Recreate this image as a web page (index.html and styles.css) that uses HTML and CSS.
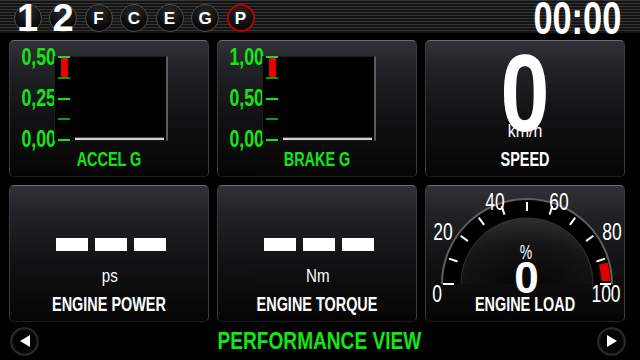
FILE: index.html
```html
<!DOCTYPE html>
<html lang="en">
<head>
    <meta charset="UTF-8">
    <meta name="viewport" content="width=device-width, initial-scale=1.0">
    <title>Performance View</title>
    <link rel="stylesheet" href="styles.css">
</head>
<body>
    <!-- Top bar: gear selector and clock -->
    <div class="topbar">
        <div class="gears">
            <span class="gear big">1</span>
            <span class="gear big">2</span>
            <span class="gear">F</span>
            <span class="gear">C</span>
            <span class="gear">E</span>
            <span class="gear">G</span>
            <span class="gear active">P</span>
        </div>
        <div class="clock">00:00</div>
    </div>

    <!-- Panels -->
    <div class="grid">
        <div class="panel">
            <div class="gchart">
                <div class="scale"><span>0,50</span><span>0,25</span><span>0,00</span></div>
                <div class="plot">
                    <div class="ticks"><i></i><i class="minor"></i><i></i><i class="minor"></i><i></i></div>
                    <div class="trace"></div>
                    <div class="marker"></div>
                </div>
            </div>
            <div class="label green">ACCEL G</div>
        </div>

        <div class="panel">
            <div class="gchart">
                <div class="scale"><span>1,00</span><span>0,50</span><span>0,00</span></div>
                <div class="plot">
                    <div class="ticks"><i></i><i class="minor"></i><i></i><i class="minor"></i><i></i></div>
                    <div class="trace"></div>
                    <div class="marker"></div>
                </div>
            </div>
            <div class="label green">BRAKE G</div>
        </div>

        <div class="panel speed">
            <div class="speed-value">0</div>
            <div class="unit">km/h</div>
            <div class="label">SPEED</div>
        </div>

        <div class="panel">
            <div class="dashes"><i></i><i></i><i></i></div>
            <div class="unit">ps</div>
            <div class="label">ENGINE POWER</div>
        </div>

        <div class="panel">
            <div class="dashes"><i></i><i></i><i></i></div>
            <div class="unit">Nm</div>
            <div class="label">ENGINE TORQUE</div>
        </div>

        <div class="panel gauge">
            <svg class="dial" viewBox="0 0 198 135" width="198" height="135">
                <defs>
                    <radialGradient id="dome" cx="50%" cy="100%" r="100%">
                        <stop offset="0" stop-color="#050505"/>
                        <stop offset="0.6" stop-color="#151515"/>
                        <stop offset="1" stop-color="#2e2e2e"/>
                    </radialGradient>
                </defs>
                <g transform="translate(101 98)">
                    <path d="M-85 0 A85 85 0 0 1 85 0 Z" fill="#000"/>
                    <path d="M-85 0 A85 85 0 0 1 85 0" fill="none" stroke="#5e5e5e" stroke-width="2"/>
                    <path d="M-66 0 A66 66 0 0 1 66 0 Z" fill="url(#dome)"/>
                    <path d="M-66 0 A66 66 0 0 1 66 0" fill="none" stroke="#333" stroke-width="1"/>
                    <g stroke="#fff" stroke-width="2">
                        <line x1="-84" y1="0" x2="-73" y2="0"/>
                        <line x1="-82" y1="0" x2="-73" y2="0" transform="rotate(18)"/>
                        <line x1="-82" y1="0" x2="-73" y2="0" transform="rotate(36)"/>
                        <line x1="-82" y1="0" x2="-73" y2="0" transform="rotate(54)"/>
                        <line x1="-82" y1="0" x2="-73" y2="0" transform="rotate(72)"/>
                        <line x1="-82" y1="0" x2="-73" y2="0" transform="rotate(90)"/>
                        <line x1="-82" y1="0" x2="-73" y2="0" transform="rotate(108)"/>
                        <line x1="-82" y1="0" x2="-73" y2="0" transform="rotate(126)"/>
                        <line x1="-82" y1="0" x2="-73" y2="0" transform="rotate(144)"/>
                        <line x1="-82" y1="0" x2="-73" y2="0" transform="rotate(162)"/>
                        <line x1="-84" y1="0" x2="-73" y2="0" transform="rotate(180)"/>
                    </g>
                    <path d="M76.3 -20.4 A79 79 0 0 1 78.95 -2.8" fill="none" stroke="#e00000" stroke-width="9"/>
                </g>
                <g class="dial-text" text-anchor="middle">
                    <text transform="translate(11 116) scale(.76 1)">0</text>
                    <text transform="translate(17 54) scale(.76 1)">20</text>
                    <text transform="translate(69 24) scale(.76 1)">40</text>
                    <text transform="translate(133 24) scale(.76 1)">60</text>
                    <text transform="translate(186 54) scale(.76 1)">80</text>
                    <text transform="translate(180 116) scale(.76 1)">100</text>
                </g>
            </svg>
            <div class="pct">%</div>
            <div class="gauge-value">0</div>
            <div class="label">ENGINE LOAD</div>
        </div>
    </div>

    <!-- Bottom bar -->
    <div class="footer">
        <span class="nav">
            <svg viewBox="0 0 10 12" width="10" height="12"><polygon points="10,0 10,12 0,6" fill="#fff"/></svg>
        </span>
        <div class="view-title">PERFORMANCE VIEW</div>
        <span class="nav">
            <svg viewBox="0 0 10 12" width="10" height="12"><polygon points="0,0 0,12 10,6" fill="#fff"/></svg>
        </span>
    </div>
</body>
</html>
```

FILE: styles.css
```css
/* Reset */
* { margin: 0; padding: 0; box-sizing: border-box; }

/* The dash font is a condensed face: Liberation Sans squeezed with scaleX */
body {
    width: 640px;
    height: 360px;
    overflow: hidden;
    background: #000;
    color: #fff;
    font-family: "Liberation Sans", Arial, sans-serif;
}

/* Top bar */
.topbar {
    height: 33px;
    display: flex;
    justify-content: space-between;
    background: repeating-linear-gradient(to bottom, #353535 0, #353535 1.5px, #141414 1.5px, #141414 3px);
}

.gears {
    display: flex;
    gap: 7.5px;
    padding: 4px 0 0 13.5px;
}

.gear {
    width: 28px;
    height: 28px;
    border-radius: 50%;
    border: 1px solid #4e4e4e;
    background: radial-gradient(circle at 50% 30%, #2c2c2c 0, #0a0a0a 65%, #000 100%);
    display: flex;
    align-items: center;
    justify-content: center;
    font-weight: bold;
    font-size: 17px;
    line-height: 1;
}

.gear.big {
    font-size: 38px;
    line-height: 26px;
}

.gear.active {
    border: 2px solid #b80000;
}

.clock {
    margin: 1px 19px 0 0;
    font-weight: bold;
    font-size: 47px;
    line-height: 34px;
    transform: scaleX(.73);
    transform-origin: right center;
}

/* Panel grid */
.grid {
    display: grid;
    grid-template-columns: repeat(3, 200px);
    grid-template-rows: repeat(2, 137px);
    gap: 8px;
    margin-top: 7px;
    padding-left: 9px;
}

.panel {
    position: relative;
    display: flex;
    flex-direction: column;
    padding-bottom: 7px;
    border: 1px solid #3a3b3e;
    border-top-color: #6c6d70;
    border-bottom-color: #1e1e1e;
    border-radius: 5px;
    background: linear-gradient(to bottom, #303236 0%, #202124 22%, #121214 55%, #050505 100%);
}

.label {
    margin-top: auto;
    text-align: center;
    font-weight: bold;
    font-size: 19.5px;
    line-height: 20px;
    transform: scaleX(.74);
}

.green { color: #14e614; }

/* G charts */
.gchart {
    display: flex;
    height: 103px;
    margin: 6px 0 0 11px;
}

.scale {
    width: 35px;
    display: flex;
    flex-direction: column;
    justify-content: space-between;
    align-items: flex-end;
    color: #14e614;
    font-weight: bold;
    font-size: 24px;
    line-height: 20px;
    transform: scaleX(.74);
    transform-origin: right center;
}

.plot {
    position: relative;
    display: flex;
    align-self: flex-start;
    width: 114px;
    height: 85px;
    margin: 9px 0 0 -2px;
    background: #000;
    border: 1px solid #1c1c1c;
    border-right: 2px solid #5c5c5c;
}

.ticks {
    width: 12px;
    margin: -1px 0 -1px 3px;
    display: flex;
    flex-direction: column;
    justify-content: space-between;
}

.ticks i {
    display: block;
    height: 2px;
    background: #14e614;
}

.ticks i.minor { background: #0c9c0c; }

.trace {
    flex: 1;
    align-self: flex-end;
    height: 2px;
    margin: 0 2px 0 5px;
    background: #d0d0d0;
    box-shadow: 0 -1px 0 #4a4a4a;
}

.marker {
    position: absolute;
    left: 6px;
    top: 1px;
    width: 7px;
    height: 19px;
    background: #e60000;
}

/* Speed */
.speed-value {
    margin-top: 12px;
    text-align: center;
    font-weight: bold;
    font-size: 110px;
    line-height: 80px;
    transform: scaleX(.8);
}

.unit {
    text-align: center;
    font-size: 18px;
    line-height: 18px;
    transform: scaleX(.84);
}

.speed .unit {
    margin-top: -10px;
    font-size: 19px;
    line-height: 16px;
}

/* No data */
.dashes {
    display: flex;
    justify-content: center;
    gap: 7px;
    margin-top: 52px;
    padding-left: 3px;
}

.dashes i {
    width: 32px;
    height: 13px;
    background: #fff;
}

.dashes + .unit {
    margin-top: 16px;
    padding-left: 2px;
}

/* Load gauge */
.dial {
    position: absolute;
    left: 0;
    top: 0;
}

.dial-text {
    fill: #fff;
    font-family: "Liberation Sans", Arial, sans-serif;
    font-size: 23px;
}

.gauge .pct,
.gauge .gauge-value,
.gauge .label {
    position: relative;
}

.pct {
    margin-top: 58px;
    padding-left: 3px;
    text-align: center;
    font-size: 20px;
    line-height: 16px;
    transform: scaleX(.7);
}

.gauge-value {
    margin-top: 2px;
    padding-left: 3px;
    text-align: center;
    font-weight: bold;
    font-size: 44px;
    line-height: 32px;
}

/* Bottom bar */
.footer {
    height: 38px;
    display: flex;
    align-items: center;
    justify-content: space-between;
    padding: 0 14px 0 10px;
}

.nav {
    width: 29px;
    height: 29px;
    border-radius: 50%;
    border: 1px solid #2e2e2e;
    background: radial-gradient(circle, #000 0, #050505 58%, #333 72%, #0c0c0c 88%, #1a1a1a 100%);
    display: flex;
    align-items: center;
    justify-content: center;
}

.view-title {
    color: #14e614;
    font-weight: bold;
    font-size: 23px;
    line-height: 1;
    padding-left: 3px;
    transform: scaleX(.83);
}
```
